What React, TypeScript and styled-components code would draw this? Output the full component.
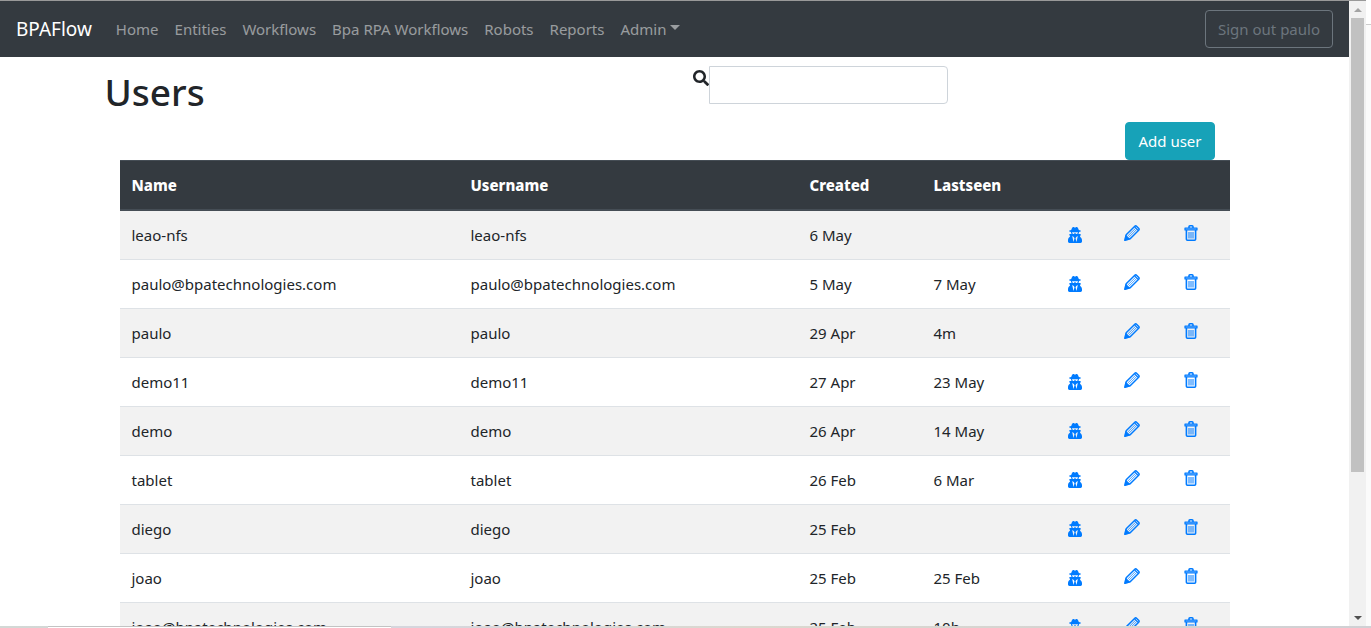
import React from 'react';
import styled, { createGlobalStyle } from 'styled-components';
import { FaSearch, FaUserSecret } from 'react-icons/fa';

const GlobalStyle = createGlobalStyle`
  *, *::before, *::after { box-sizing: border-box; }
  body {
    margin: 0;
    background: #fff;
    color: #212529;
    font-family: 'Segoe UI', 'Noto Sans', 'Open Sans', sans-serif;
    font-size: 15px;
    line-height: 24px;
  }
`;

const Window = styled.div`
  display: grid;
  grid-template-columns: 1fr 17px 5px;
  grid-template-rows: 1fr 2px;
  height: 100vh;
  overflow: hidden;
`;

const Page = styled.div`
  min-height: 0;
  overflow: hidden;
  border-top: 1px solid #999;
`;

const Navbar = styled.nav`
  display: flex;
  align-items: center;
  height: 56px;
  padding: 0 16px;
  background: #343a40;
`;

const Brand = styled.a`
  margin-right: 16px;
  color: #fff;
  font-size: 19px;
  line-height: 30px;
  text-decoration: none;
`;

const NavList = styled.ul`
  display: flex;
  flex: 1;
  margin: 0;
  padding: 0;
  list-style: none;
`;

const NavLink = styled.a`
  display: flex;
  align-items: center;
  gap: 4px;
  padding: 8px;
  color: rgba(255, 255, 255, 0.5);
  text-decoration: none;
`;

const Caret = styled.span`
  border-top: 5px solid;
  border-right: 5px solid transparent;
  border-left: 5px solid transparent;
  margin-bottom: 4px;
`;

const Button = styled.button<{ $outline?: boolean }>`
  height: 38px;
  padding: 0 12px;
  border: 1px solid ${(p) => (p.$outline ? '#6c757d' : '#17a2b8')};
  border-radius: 4px;
  background: ${(p) => (p.$outline ? 'transparent' : '#17a2b8')};
  color: ${(p) => (p.$outline ? '#6c757d' : '#fff')};
  font: inherit;
  cursor: pointer;
`;

const Container = styled.main`
  max-width: 1140px;
  margin: 0 auto;
  padding-top: 9px;
`;

const TitleRow = styled.div`
  display: grid;
  grid-template-columns: minmax(0, 588fr) minmax(0, 255fr) minmax(0, 297fr);
  align-items: start;
  margin-bottom: 4px;
`;

const Title = styled.h1`
  margin: 0;
  font-size: 37px;
  font-weight: 500;
  line-height: 52px;
`;

const SearchLabel = styled.label`
  display: flex;
  align-items: flex-start;
  font-size: 16px;

  svg {
    flex: none;
    margin-top: 4px;
  }
`;

const SearchInput = styled.input`
  flex: 1;
  min-width: 0;
  height: 38px;
  padding: 6px 12px;
  border: 1px solid #ced4da;
  border-radius: 0 4px 4px 0;
  background: #fff;
  color: #495057;
  font: inherit;
`;

const Actions = styled.div`
  display: flex;
  justify-content: flex-end;
  padding: 0 30px;
`;

const TableWrap = styled.div`
  padding: 0 15px;
`;

const Table = styled.table`
  width: 100%;
  table-layout: fixed;
  border-collapse: separate;
  border-spacing: 0;
`;

const Col = styled.col<{ $width?: number }>`
  width: ${(p) => (p.$width ? `${p.$width}px` : 'auto')};
`;

const HeadCell = styled.th`
  height: 51px;
  padding: 0 12px;
  border-top: 1px solid #454d55;
  border-bottom: 2px solid #454d55;
  background: #343a40;
  color: #fff;
  font-weight: 800;
  text-align: left;
`;

const Row = styled.tr`
  &:nth-child(odd) { background: #f2f2f2; }
  &:not(:first-child) td { border-top: 1px solid #dee2e6; }
`;

const Cell = styled.td`
  padding: 12px;
`;

const IconCell = styled.td<{ $raised?: boolean }>`
  padding: ${(p) => (p.$raised ? '0 12px 4px' : '0 12px')};
`;

const IconButton = styled.button`
  display: block;
  padding: 0;
  border: 0;
  background: none;
  color: #007bff;
  font-size: 16px;
  line-height: 16px;
  cursor: pointer;

  svg { display: block; }
`;

const SecretIcon = styled(FaUserSecret)`
  width: 14px;
`;

const Scrollbar = styled.div`
  display: flex;
  flex-direction: column;
  align-items: center;
  background: #f1f1f1;
  border-top: 1px solid #999;
`;

const Arrow = styled.span<{ $down?: boolean }>`
  display: flex;
  flex: none;
  align-items: center;
  height: 17px;

  &::before {
    content: '';
    border: 4px solid transparent;
    border-top: ${(p) => (p.$down ? '4px solid #505050' : '0')};
    border-bottom: ${(p) => (p.$down ? '0' : '4px solid #a3a3a3')};
  }
`;

const Thumb = styled.span`
  flex: 454;
  width: 13px;
  background: #c1c1c1;
`;

const Track = styled.span`
  flex: 137;
`;

const Gutter = styled.div`
  background: #fbfbfb;

  &::before {
    content: '';
    display: block;
    height: 25px;
    border-bottom: 1px solid #ccc;
    background: #fff;
  }
`;

const BottomEdge = styled.div`
  display: flex;
  grid-column: 1 / -1;
  background: linear-gradient(90deg, #d3d8d5, #d6d6dd 30%, #dbd8cf 55%, #d0d0d4);
`;

const BottomTab = styled.span`
  width: 343px;
  margin-left: 48px;
  border-top: 1px solid #c3c3c3;
  background: #fff;
`;

const PencilIcon = () => (
  <svg width="16" height="16" viewBox="0 0 16 16" fill="none" stroke="currentColor" aria-hidden="true">
    <path d="M2.2 9.8 10.8 1.3Q11.6 .5 12.5 1.2L14.8 3.5Q15.5 4.4 14.7 5.2L6.2 13.8L.9 15.2Z" strokeWidth="1.5" strokeLinejoin="round" />
    <path d="M3.4 11.4 11.8 3M4.6 12.6 13 4.2" strokeWidth="1" strokeOpacity=".75" />
    <path d="M1.9 10.2 5.8 14.1L.7 15.4Z" fill="currentColor" strokeWidth=".5" />
    <path d="M10.4 1.6 14.4 5.6" strokeWidth="1.2" />
  </svg>
);

const TrashIcon = () => (
  <svg width="14" height="16" viewBox="0 0 14 16" fill="none" stroke="currentColor" aria-hidden="true">
    <path d="M5 3V1.7Q5 .8 5.9 .8H8.1Q9 .8 9 1.7V3" strokeWidth="1.6" />
    <path d="M1 3H13V5H1Z" fill="currentColor" fillOpacity=".6" strokeWidth="1.2" strokeLinejoin="round" />
    <path d="M2.4 5V14.2Q2.4 15.2 3.4 15.2H10.6Q11.6 15.2 11.6 14.2V5" strokeWidth="1.6" />
    <path d="M5 7V13.5M7 7V13.5M9 7V13.5" strokeWidth="1" />
  </svg>
);

const links = ['Home', 'Entities', 'Workflows', 'Bpa RPA Workflows', 'Robots', 'Reports'];

const users = [
  { name: 'leao-nfs', created: '6 May', seen: '' },
  { name: 'paulo@bpatechnologies.com', created: '5 May', seen: '7 May' },
  { name: 'paulo', created: '29 Apr', seen: '4m', current: true },
  { name: 'demo11', created: '27 Apr', seen: '23 May' },
  { name: 'demo', created: '26 Apr', seen: '14 May' },
  { name: 'tablet', created: '26 Feb', seen: '6 Mar' },
  { name: 'diego', created: '25 Feb', seen: '' },
  { name: 'joao', created: '25 Feb', seen: '25 Feb' },
  { name: 'joao@bpatechnologies.com', created: '25 Feb', seen: '10h' },
];

export default function App() {
  return (
    <>
      <GlobalStyle />
      <Window>
        <Page>
          <Navbar>
            <Brand href="#">BPAFlow</Brand>
            <NavList>
              {links.map((label) => (
                <li key={label}>
                  <NavLink href="#">{label}</NavLink>
                </li>
              ))}
              <li>
                <NavLink href="#" aria-haspopup="true">
                  Admin
                  <Caret />
                </NavLink>
              </li>
            </NavList>
            <Button type="button" $outline>Sign out paulo</Button>
          </Navbar>
          <Container>
            <TitleRow>
              <Title>Users</Title>
              <SearchLabel>
                <FaSearch aria-hidden="true" />
                <SearchInput type="text" aria-label="Search users" />
              </SearchLabel>
            </TitleRow>
            <Actions>
              <Button type="button">Add user</Button>
            </Actions>
            <TableWrap>
              <Table>
                <colgroup>
                  <Col />
                  <Col />
                  <Col $width={124} />
                  <Col $width={134} />
                  <Col $width={56} />
                  <Col $width={60} />
                  <Col $width={58} />
                </colgroup>
                <thead>
                  <tr>
                    <HeadCell scope="col">Name</HeadCell>
                    <HeadCell scope="col">Username</HeadCell>
                    <HeadCell scope="col">Created</HeadCell>
                    <HeadCell scope="col">Lastseen</HeadCell>
                    <HeadCell />
                    <HeadCell />
                    <HeadCell />
                  </tr>
                </thead>
                <tbody>
                  {users.map((user) => (
                    <Row key={user.name}>
                      <Cell>{user.name}</Cell>
                      <Cell>{user.name}</Cell>
                      <Cell>{user.created}</Cell>
                      <Cell>{user.seen}</Cell>
                      <IconCell>
                        {!user.current && (
                          <IconButton type="button" aria-label={`Impersonate ${user.name}`}>
                            <SecretIcon />
                          </IconButton>
                        )}
                      </IconCell>
                      <IconCell $raised>
                        <IconButton type="button" aria-label={`Edit ${user.name}`}>
                          <PencilIcon />
                        </IconButton>
                      </IconCell>
                      <IconCell $raised>
                        <IconButton type="button" aria-label={`Delete ${user.name}`}>
                          <TrashIcon />
                        </IconButton>
                      </IconCell>
                    </Row>
                  ))}
                </tbody>
              </Table>
            </TableWrap>
          </Container>
        </Page>
        <Scrollbar aria-hidden="true">
          <Arrow />
          <Thumb />
          <Track />
          <Arrow $down />
        </Scrollbar>
        <Gutter />
        <BottomEdge>
          <BottomTab />
        </BottomEdge>
      </Window>
    </>
  );
}
